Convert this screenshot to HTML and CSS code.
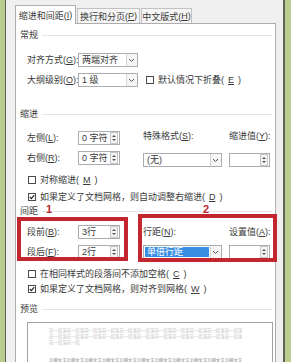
FILE: index.html
```html
<!DOCTYPE html>
<html lang="zh-CN">
<head>
  <meta charset="UTF-8" />
  <meta name="viewport" content="width=device-width, initial-scale=1.0"/>
  <title>段落</title>
  <link rel="stylesheet" href="styles.css">
</head>
<body>

  <div class="window">
    <div class="tabs">
      <div class="tab active">缩进和间距(<u>I</u>)</div>
      <div class="tab">换行和分页(<u>P</u>)</div>
      <div class="tab">中文版式(<u>H</u>)</div>
    </div>

    <div class="panel">
      <div class="group-title">常规</div>
      <div class="grid general">
        <span class="label">对齐方式(<u>G</u>):</span>
        <div class="select short"><span class="value">两端对齐</span><span class="drop"><svg width="9" height="12" viewBox="0 0 9 12"><path d="M2 5 L4.5 7.5 L7 5" fill="none" stroke="#555"/></svg></span></div>
        <span></span>
        <span></span>
        <span class="label">大纲级别(<u>O</u>):</span>
        <div class="select short"><span class="value">1 级</span><span class="drop"><svg width="9" height="12" viewBox="0 0 9 12"><path d="M2 5 L4.5 7.5 L7 5" fill="none" stroke="#555"/></svg></span></div>
        <div class="check wide"><span class="box"></span>默认情况下折叠(<u>E</u>)</div>
      </div>

      <div class="group-title indent-title">缩进</div>
      <div class="grid block">
        <span class="label">左侧(<u>L</u>):</span>
        <div class="spinner"><span class="value">0 字符</span><svg class="spin" width="8" height="12" viewBox="0 0 8 12"><rect x="0.5" y="0.5" width="7" height="11" fill="#f4f4f4" stroke="#c6c6c6"/><path d="M2 5 L4 3 L6 5Z M2 7 L4 9 L6 7Z" fill="#555"/></svg></div>
        <span class="label top">特殊格式(<u>S</u>):</span>
        <span class="label top">缩进值(<u>Y</u>):</span>
        <span class="label">右侧(<u>R</u>):</span>
        <div class="spinner"><span class="value">0 字符</span><svg class="spin" width="8" height="12" viewBox="0 0 8 12"><rect x="0.5" y="0.5" width="7" height="11" fill="#f4f4f4" stroke="#c6c6c6"/><path d="M2 5 L4 3 L6 5Z M2 7 L4 9 L6 7Z" fill="#555"/></svg></div>
        <div class="select long low"><span class="value">(无)</span><span class="drop"><svg width="9" height="12" viewBox="0 0 9 12"><path d="M2 5 L4.5 7.5 L7 5" fill="none" stroke="#555"/></svg></span></div>
        <div class="spinner narrow low"><span class="value"></span><svg class="spin" width="8" height="12" viewBox="0 0 8 12"><rect x="0.5" y="0.5" width="7" height="11" fill="#f4f4f4" stroke="#c6c6c6"/><path d="M2 5 L4 3 L6 5Z M2 7 L4 9 L6 7Z" fill="#555"/></svg></div>
      </div>

      <div class="check row first"><span class="box"></span>对称缩进(<u>M</u>)</div>
      <div class="check row"><span class="box checked"><svg width="6" height="6" viewBox="0 0 6 6"><path d="M0.8 3 L2.4 4.6 L5.2 1.2" fill="none" stroke="#222" stroke-width="1.2"/></svg></span>如果定义了文档网格，则自动调整右缩进(<u>D</u>)</div>

      <div class="group-title spacing-title">间距</div>
      <div class="grid block spacing">
        <span class="label">段前(<u>B</u>):</span>
        <div class="spinner"><span class="value">3行</span><svg class="spin" width="8" height="12" viewBox="0 0 8 12"><rect x="0.5" y="0.5" width="7" height="11" fill="#f4f4f4" stroke="#c6c6c6"/><path d="M2 5 L4 3 L6 5Z M2 7 L4 9 L6 7Z" fill="#555"/></svg></div>
        <span class="label">行距(<u>N</u>):</span>
        <span class="label">设置值(<u>A</u>):</span>
        <span class="label">段后(<u>F</u>):</span>
        <div class="spinner"><span class="value">2行</span><svg class="spin" width="8" height="12" viewBox="0 0 8 12"><rect x="0.5" y="0.5" width="7" height="11" fill="#f4f4f4" stroke="#c6c6c6"/><path d="M2 5 L4 3 L6 5Z M2 7 L4 9 L6 7Z" fill="#555"/></svg></div>
        <div class="select long focused"><span class="value">单倍行距</span><span class="drop"><svg width="9" height="12" viewBox="0 0 9 12"><path d="M2 5 L4.5 7.5 L7 5" fill="none" stroke="#555"/></svg></span></div>
        <div class="spinner narrow"><span class="value"></span><svg class="spin" width="8" height="12" viewBox="0 0 8 12"><rect x="0.5" y="0.5" width="7" height="11" fill="#f4f4f4" stroke="#c6c6c6"/><path d="M2 5 L4 3 L6 5Z M2 7 L4 9 L6 7Z" fill="#555"/></svg></div>
      </div>

      <div class="check row first"><span class="box"></span>在相同样式的段落间不添加空格(<u>C</u>)</div>
      <div class="check row tight"><span class="box checked"><svg width="6" height="6" viewBox="0 0 6 6"><path d="M0.8 3 L2.4 4.6 L5.2 1.2" fill="none" stroke="#222" stroke-width="1.2"/></svg></span>如果定义了文档网格，则对齐到网格(<u>W</u>)</div>

      <div class="group-title preview-title">预览</div>
      <div class="preview">
        <div class="prev-text">前一段落前一段落前一段落前一段落前一段落前一段落前一段落前一段落前一段落前一段落前一段落前一段落前一段落前一段落前一段落前一段落前一段落前一段落前一段落前一段落前一段落前一段落前一段落前一段</div>
        <div class="sample">示例文字示例文字示例文字示例文字示例文字示例文字示例文字示例文字示例文字示例文字示例文字</div>
      </div>

      <div class="mark box-one"></div>
      <div class="mark box-two"></div>
      <div class="mark-num num-one">1</div>
      <div class="mark-num num-two">2</div>
    </div>
  </div>

</body>
</html>
```

FILE: styles.css
```css
body {
  margin: 0;
  height: 362px;
  overflow: hidden;
  background: #b9cd8f;
  font-family: 'Liberation Sans', 'Noto Sans CJK SC', sans-serif;
  font-size: 9px;
  color: #3a3a3a;
  text-autospace: no-autospace;
}

.window {
  margin: 0 6px 0 5px;
  height: 362px;
  box-sizing: border-box;
  border-left: 1px solid #5e6558;
  border-right: 2px solid #5e6558;
  background: #f0f0f0;
  padding: 5px 7px 0 9px;
}

.tabs {
  display: flex;
  align-items: flex-end;
  height: 18px;
}

.tab {
  box-sizing: border-box;
  height: 15px;
  border: 1px solid #c2c2c2;
  border-bottom: none;
  background: #f5f5f5;
  display: flex;
  align-items: center;
  justify-content: center;
  white-space: nowrap;
  width: 63px;
  margin-left: 1px;
}

.tab:last-child {
  width: 51px;
}

.tab.active {
  position: relative;
  z-index: 2;
  width: 61px;
  height: 19px;
  margin: 0 0 -1px 0;
  background: white;
  border-color: #adadad;
}

.panel {
  position: relative;
  height: 400px;
  background: white;
  border: 1px solid #adadad;
  padding: 5px 3px 0 4px;
}

.group-title {
  display: flex;
  align-items: center;
  height: 12px;
  line-height: 12px;
}

.group-title::after {
  content: '';
  flex: 1;
  height: 1px;
  background: #e4e4e4;
  margin-left: 4px;
}

.indent-title { margin-top: 21px; }
.spacing-title { margin-top: 2px; }
.preview-title { margin-top: 8px; }

.grid {
  display: grid;
  grid-template-columns: 51px 65px 86px 41px;
  grid-auto-rows: 14px;
  row-gap: 6px;
  align-items: center;
  margin-left: 7px;
}

.general { margin-top: 12px; }
.block { margin-top: 11px; }
.spacing { margin-top: 8px; }

.label {
  white-space: nowrap;
  line-height: 12px;
}

.label.top {
  align-self: start;
  margin-top: -1px;
}

.select, .spinner {
  box-sizing: border-box;
  height: 14px;
  display: flex;
  align-items: center;
  border: 1px solid #abadb3;
  background: white;
}

.select.short { width: 60px; }
.select.long { width: 79px; }
.select.low, .spinner.low { margin-top: 3px; }

.select .value, .spinner .value {
  flex: 1;
  padding-left: 3px;
  line-height: 12px;
  white-space: nowrap;
}

.drop {
  width: 10px;
  height: 12px;
  border-left: 1px solid #d4d4d4;
  background: #f6f6f6;
  display: flex;
}

.select.focused .value {
  margin: 1px;
  padding-left: 2px;
  line-height: 10px;
  background: #3b8fe3;
  color: white;
}

.spinner { width: 42px; }
.spinner.narrow { width: 41px; }

.spin {
  margin-right: 1px;
}

.check {
  display: flex;
  align-items: center;
  gap: 4px;
  white-space: nowrap;
  height: 12px;
  line-height: 12px;
}

.check.wide {
  grid-column: 3 / 5;
  margin-left: 3px;
}

.check.row {
  margin: 5px 0 0 8px;
}

.check.row.first { margin-top: 9px; }
.check.row.tight { margin-top: 3px; }

.box {
  box-sizing: border-box;
  width: 8px;
  height: 8px;
  border: 1px solid #4a4a4a;
  background: white;
  display: flex;
  align-items: center;
  justify-content: center;
}

.preview {
  margin: 7px 0 0 7px;
  width: 246px;
  height: 70px;
  box-sizing: border-box;
  border: 1px solid #a3a3a3;
  padding: 5px 0 0 21px;
}

.prev-text {
  width: 196px;
  height: 18px;
  font-size: 4.4px;
  line-height: 6px;
  color: #c4c4c4;
}

.sample {
  margin-top: 12px;
  font-size: 4.4px;
  line-height: 6px;
  color: #777;
}

.mark {
  position: absolute;
  box-sizing: border-box;
  border: 4px solid #c3262f;
}

.box-one {
  left: 1px;
  top: 193px;
  width: 111px;
  height: 44px;
}

.box-two {
  left: 122px;
  top: 190px;
  width: 139px;
  height: 48px;
}

.mark-num {
  position: absolute;
  top: 180px;
  font-family: 'Liberation Sans', sans-serif;
  font-weight: bold;
  font-size: 11px;
  line-height: 11px;
  color: #c3262f;
}

.num-one { left: 30px; }
.num-two { left: 187px; }
```
